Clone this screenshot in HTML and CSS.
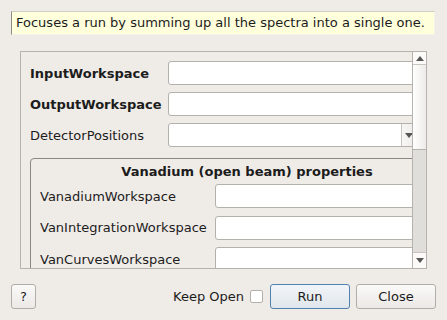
FILE: index.html
```html
<!DOCTYPE html>
<html lang="en">
<head>
  <meta charset="UTF-8" />
  <title>Algorithm Dialog</title>
  <link rel="stylesheet" href="styles.css">
</head>
<body>
  <!-- Description tooltip -->
  <div class="tooltip">Focuses a run by summing up all the spectra into a single one.</div>

  <!-- Properties scroll area -->
  <div class="scroll-area">
    <div class="viewport">
      <div class="content">
        <div class="prop-grid">
          <label class="bold">InputWorkspace</label>
          <div class="field"></div>
          <label class="bold">OutputWorkspace</label>
          <div class="field"></div>
          <label>DetectorPositions</label>
          <div class="combo"><div class="combo-text"></div><div class="combo-btn"><span class="arrow-down"></span></div></div>
        </div>

        <div class="group">
          <div class="group-title">Vanadium (open beam) properties</div>
          <div class="group-grid">
            <label>VanadiumWorkspace</label>
            <div class="field"></div>
            <label>VanIntegrationWorkspace</label>
            <div class="field"></div>
            <label>VanCurvesWorkspace</label>
            <div class="field"></div>
          </div>
        </div>
      </div>
    </div>
    <div class="scrollbar">
      <div class="sb-btn sb-up"><span class="arrow-up"></span></div>
      <div class="sb-handle"></div>
      <div class="sb-track"></div>
      <div class="sb-btn sb-down"><span class="arrow-down"></span></div>
    </div>
  </div>

  <!-- Buttons -->
  <div class="button-row">
    <button class="btn btn-help">?</button>
    <div class="spacer"></div>
    <label class="keep-open">Keep Open <span class="checkbox"></span></label>
    <button class="btn btn-run">Run</button>
    <button class="btn">Close</button>
  </div>
</body>
</html>
```

FILE: styles.css
```css
* {
  margin: 0;
  padding: 0;
  box-sizing: border-box;
}

body {
  font-family: 'DejaVu Sans', sans-serif;
  font-size: 13px;
  color: #1c1c1c;
  background: #efebe7;
  width: 447px;
  height: 320px;
  overflow: hidden;
}

/* Tooltip */
.tooltip {
  margin: 11px 12px 0 11px;
  height: 24px;
  line-height: 22px;
  padding-left: 4px;
  background: #ffffdc;
  border-top: 1px solid #cfcdc4;
  border-left: 1px solid #8e8c86;
  border-right: 1px solid #f4f2e8;
  border-bottom: 1px solid #f4f2e8;
  white-space: nowrap;
}

/* Scroll area */
.scroll-area {
  display: flex;
  margin: 16px 0 0 20px;
  width: 407px;
  height: 218px;
  border: 1px solid #b6b2ad;
}

.viewport {
  flex: 1;
  overflow: hidden;
}

.content {
  width: 460px;
  padding: 9px 0 0 9px;
}

.prop-grid {
  display: grid;
  grid-template-columns: 138px 1fr;
  row-gap: 7px;
  align-items: center;
}

.prop-grid label,
.group-grid label {
  white-space: nowrap;
}

.bold {
  font-weight: bold;
}

.field {
  height: 24px;
  background: #fff;
  border: 1px solid #b4b1ac;
  border-radius: 3px;
}

.combo {
  display: flex;
  height: 24px;
  background: #fff;
  border: 1px solid #b4b1ac;
  border-radius: 3px;
}

.combo-text {
  width: 232px;
}

.combo-btn {
  width: 14px;
  border-left: 1px solid #c8c5c0;
  background: linear-gradient(to right, #f7f6f5, #eeecea);
  display: flex;
  align-items: center;
  padding-left: 3px;
}

.arrow-down {
  width: 0;
  height: 0;
  border-left: 4px solid transparent;
  border-right: 4px solid transparent;
  border-top: 5px solid #555;
}

.arrow-up {
  width: 0;
  height: 0;
  border-left: 4px solid transparent;
  border-right: 4px solid transparent;
  border-bottom: 5px solid #555;
}

/* Group box */
.group {
  margin-top: 11px;
  width: 434px;
  border: 1px solid #8a8884;
  border-radius: 4px;
  padding: 0 0 0 9px;
  height: 120px;
}

.group-title {
  height: 25px;
  line-height: 25px;
  text-align: center;
  font-weight: bold;
  padding-right: 9px;
}

.group-grid {
  display: grid;
  grid-template-columns: 175px 1fr;
  row-gap: 7.5px;
  align-items: center;
}

/* Scrollbar */
.scrollbar {
  width: 14px;
  display: flex;
  flex-direction: column;
  border-left: 1px solid #b6b2ad;
}

.sb-btn {
  height: 13px;
  background: #fbfaf9;
  display: flex;
  align-items: center;
  justify-content: center;
}

.sb-up {
  border-bottom: 1px solid #c9c6c1;
}

.sb-down {
  height: 16px;
  border-top: 1px solid #c9c6c1;
}

.sb-handle {
  height: 85px;
  background: linear-gradient(to right, #ffffff, #ecebe9);
  border-bottom: 1px solid #b6b2ad;
}

.sb-track {
  flex: 1;
  background: #dfdedb;
}

/* Bottom buttons */
.button-row {
  display: flex;
  align-items: center;
  margin-top: 15px;
  padding: 0 11px;
}

.spacer {
  flex: 1;
}

.btn {
  font-family: 'DejaVu Sans', sans-serif;
  font-size: 13px;
  color: #1c1c1c;
  height: 25px;
  width: 80px;
  margin-left: 6px;
  border: 1px solid #b1ada8;
  border-radius: 3px;
  background: linear-gradient(to bottom, #fbfaf9, #ebe8e5);
}

.btn-help {
  width: 25px;
  margin-left: 0;
}

.btn-run {
  border-color: #4f82b1;
  background: linear-gradient(to bottom, #f2f5f8, #e0e6ec);
}

.keep-open {
  display: flex;
  align-items: center;
  gap: 6px;
  margin-right: 1px;
}

.checkbox {
  width: 13px;
  height: 13px;
  background: #fff;
  border: 1px solid #b4b1ac;
  border-radius: 2px;
}
```
